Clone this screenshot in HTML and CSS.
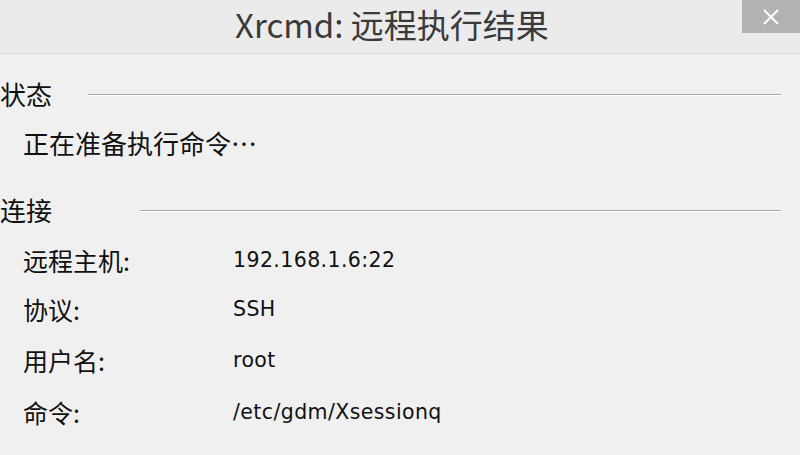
FILE: index.html
```html
<!DOCTYPE html>
<html lang="zh-CN">
<head>
  <meta charset="UTF-8">
  <title>Xrcmd: 远程执行结果</title>
  <link rel="stylesheet" href="styles.css">
</head>
<body>
  <div class="window">
    <div class="titlebar">
      <span class="title">Xrcmd: 远程执行结果</span>
      <button class="close" type="button">
        <svg width="18" height="18" viewBox="0 0 18 18"><path d="M2 2 L16 16 M16 2 L2 16" stroke="#fff" stroke-width="2" fill="none"/></svg>
      </button>
    </div>
    <div class="content">
      <div class="group-head">
        <span class="group-name">状态</span>
        <span class="sep sep-status"></span>
      </div>
      <div class="status-text">正在准备执行命令…</div>

      <div class="group-head group-conn">
        <span class="group-name">连接</span>
        <span class="sep sep-conn"></span>
      </div>
      <div class="info">
        <div class="key">远程主机:</div><div class="val">192.168.1.6:22</div>
        <div class="key">协议:</div><div class="val">SSH</div>
        <div class="key">用户名:</div><div class="val">root</div>
        <div class="key">命令:</div><div class="val">/etc/gdm/Xsessionq</div>
      </div>
    </div>
  </div>
</body>
</html>
```

FILE: styles.css
```css
html, body { margin: 0; padding: 0; }
body {
  width: 800px;
  height: 455px;
  overflow: hidden;
  background: #f0f0f0;
  color: #111;
  font-family: "Noto Sans CJK SC", "DejaVu Sans", sans-serif;
}
.window { display: flex; flex-direction: column; height: 100%; }

.titlebar {
  position: relative;
  height: 53px;
  background: #ebebeb;
  border-bottom: 1px solid #dcdcdc;
  display: flex;
  align-items: flex-start;
  justify-content: center;
  flex-shrink: 0;
}
.title {
  font-size: 33px;
  line-height: normal;
  color: #3a3a3a;
  margin-left: -16px;
}
.close {
  position: absolute;
  top: 0;
  right: 0;
  width: 58px;
  height: 33px;
  border: none;
  padding: 0;
  background: #b2b2b2;
  display: flex;
  align-items: center;
  justify-content: center;
}

.content { padding: 0 19px 0 0; }

.group-head {
  display: flex;
  align-items: center;
  height: 36px;
  margin-top: 22px;
}
.group-conn { margin-top: 31px; }
.group-name { font-size: 26px; line-height: 36px; }
.sep {
  flex: 1;
  height: 0;
  border-top: 1px solid #a8a8a8;
  border-bottom: 1px solid #fff;
  margin-top: 1px;
}
.sep-status { margin-left: 36px; }
.sep-conn { margin-left: 88px; }

.status-text {
  font-size: 26px;
  line-height: 36px;
  padding-left: 23px;
  margin-top: 13px;
}

.info {
  display: grid;
  grid-template-columns: 210px 1fr;
  grid-template-rows: 48px 50px 51px 53px;
  align-items: center;
  padding-left: 23px;
  margin-top: 8px;
}
.key { font-size: 25px; }
.val {
  font-family: "DejaVu Sans", sans-serif;
  font-size: 20.5px;
  letter-spacing: 0.4px;
}
```
